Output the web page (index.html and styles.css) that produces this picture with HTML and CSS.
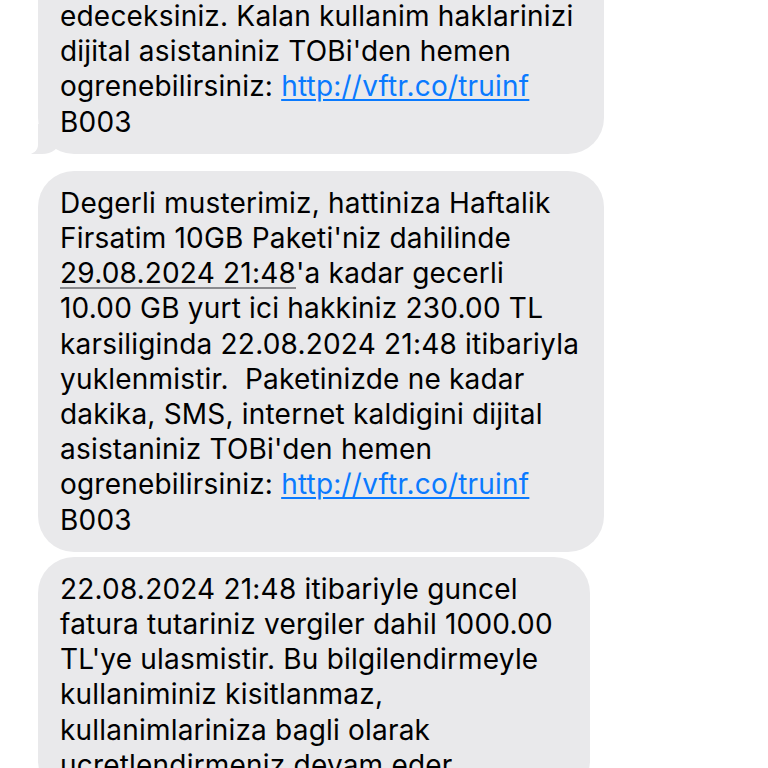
FILE: index.html
```html
<!DOCTYPE html>
<html lang="tr">
<head>
  <meta charset="UTF-8" />
  <meta name="viewport" content="width=device-width, initial-scale=1" />
  <title>Mesajlar</title>
  <link rel="stylesheet" href="styles.css">
</head>
<body>
<div class="thread">
  <!-- first message is scrolled partly out of view -->
  <div class="bubble bubble-tail bubble-first">
    <div class="msg-text">edeceksiniz. Kalan kullanim haklarinizi<br>dijital asistaniniz TOBi'den hemen<br>ogrenebilirsiniz: <a class="msg-link" href="#">http://vftr.co/truinf</a><br>B003</div>
  </div>

  <div class="bubble bubble-group">
    <div class="msg-text">Degerli musterimiz, hattiniza Haftalik<br>Firsatim 10GB Paketi'niz dahilinde<br><span class="msg-date">29.08.2024 21:48</span>'a kadar gecerli<br>10.00 GB yurt ici hakkiniz 230.00 TL<br>karsiliginda 22.08.2024 21:48 itibariyla<br>yuklenmistir.&nbsp; Paketinizde ne kadar<br>dakika, SMS, internet kaldigini dijital<br>asistaniniz TOBi'den hemen<br>ogrenebilirsiniz: <a class="msg-link" href="#">http://vftr.co/truinf</a><br>B003</div>
  </div>

  <div class="bubble bubble-narrow">
    <div class="msg-text">22.08.2024 21:48 itibariyle guncel<br>fatura tutariniz vergiler dahil 1000.00<br>TL'ye ulasmistir. Bu bilgilendirmeyle<br>kullaniminiz kisitlanmaz,<br>kullanimlariniza bagli olarak<br>ucretlendirmeniz devam eder.</div>
  </div>
</div>
</body>
</html>
```

FILE: styles.css
```css
body, html {
  margin: 0;
  padding: 0;
  background: #fff;
  font-family: Inter, 'Noto Sans', sans-serif;
  color: #000;
  overflow: hidden;
}
.thread {
  display: flex;
  flex-direction: column;
  align-items: flex-start;
  padding-left: 38px;
}
.bubble {
  position: relative;
  background: #e9e9eb;
  border-radius: 36px;
  padding: 15px 20px 14px 22px;
  width: 566px;
  box-sizing: border-box;
}
.bubble-first {
  margin-top: -20px;
  border-top-left-radius: 0;
  border-top-right-radius: 0;
  padding-top: 19px;
  padding-bottom: 14px;
}
.bubble-group {
  margin-top: 17px;
}
.bubble-narrow {
  margin-top: 5px;
  width: 552px;
}
.bubble-tail::before {
  content: "";
  position: absolute;
  left: -8px;
  bottom: 0;
  width: 30px;
  height: 30px;
  background: #e9e9eb;
  border-bottom-right-radius: 18px 14px;
  z-index: 0;
}
.bubble-tail::after {
  content: "";
  position: absolute;
  left: -24px;
  bottom: -1px;
  width: 24px;
  height: 32px;
  background: #fff;
  border-bottom-right-radius: 12px 10px;
  z-index: 0;
}
.msg-text {
  position: relative;
  z-index: 1;
  font-size: 28px;
  line-height: 35.2px;
  white-space: nowrap;
  letter-spacing: 0.2px;
}
.msg-link {
  color: #0a7aff;
  text-decoration: underline;
  text-decoration-thickness: 2px;
  text-underline-offset: 3px;
}
.msg-date {
  text-decoration: underline;
  text-decoration-color: #8a8a8e;
  text-decoration-thickness: 2px;
  text-underline-offset: 4px;
}
```
